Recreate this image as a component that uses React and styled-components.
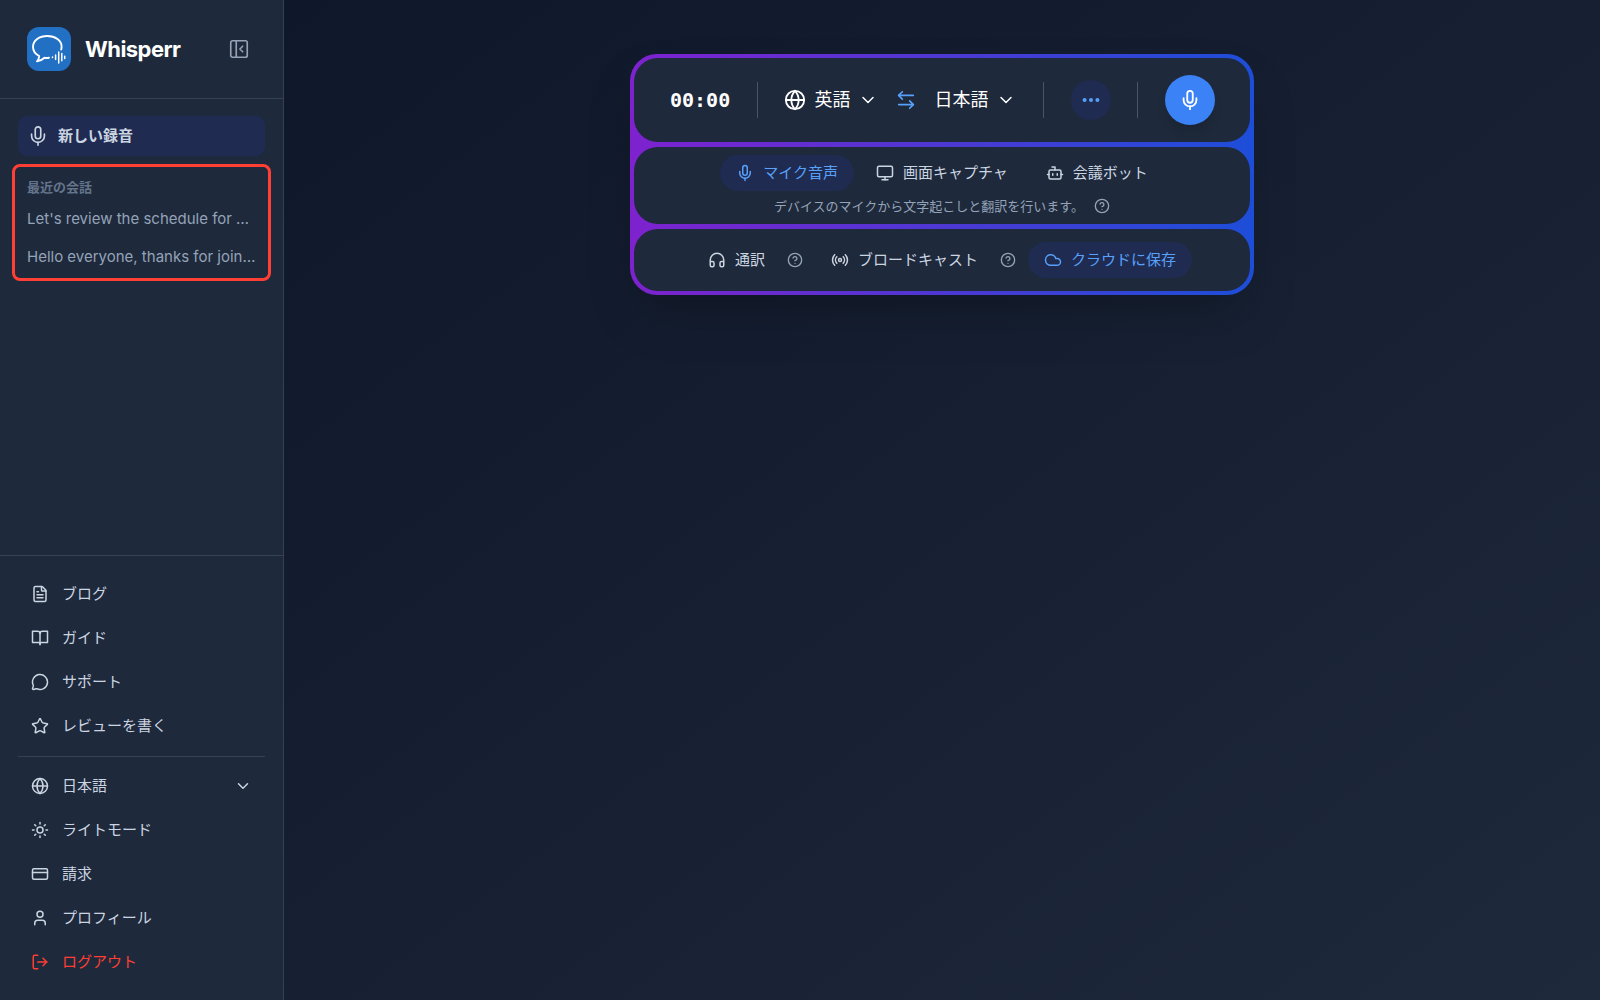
import { useState } from "react";
import styled, { createGlobalStyle, css } from "styled-components";
import {
  ArrowLeftRight,
  Bot,
  ChevronDown,
  CircleQuestionMark,
  Cloud,
  CreditCard,
  Ellipsis,
  FileText,
  Globe,
  Headphones,
  LogOut,
  MessageCircle,
  Mic,
  Monitor,
  PanelLeftClose,
  Radio,
  Star,
  Sun,
  User,
} from "lucide-react";

const GlobalStyle = createGlobalStyle`
  *, *::before, *::after {
    box-sizing: border-box;
  }

  body {
    margin: 0;
    background: #0f172a;
    color: #fff;
    font-family: Inter, "Noto Sans CJK JP", sans-serif;
    font-size: 15px;
    line-height: 24px;
    -webkit-font-smoothing: antialiased;
  }

  button, select {
    font: inherit;
    color: inherit;
    border: 0;
    padding: 0;
    background: none;
    cursor: pointer;
  }

  a {
    color: inherit;
    text-decoration: none;
  }

  svg {
    flex-shrink: 0;
  }
`;

const Layout = styled.div`
  display: flex;
  min-height: 100vh;
`;

/* ---------- sidebar ---------- */

const Sidebar = styled.aside`
  display: flex;
  flex-direction: column;
  width: 284px;
  flex-shrink: 0;
  background: #1e293b;
  border-right: 1px solid #334155;
`;

const SidebarHeader = styled.header`
  display: flex;
  align-items: center;
  gap: 14px;
  padding: 27px 33px 27px 27px;
  border-bottom: 1px solid #334155;
`;

const Brand = styled.h1`
  flex: 1;
  margin: 0;
  font-size: 22px;
  font-weight: 700;
  line-height: 32px;
  letter-spacing: -0.025em;
`;

const CollapseButton = styled.button`
  display: flex;
  color: #94a3b8;
`;

const NewRecording = styled.button`
  display: flex;
  align-items: center;
  gap: 9px;
  height: 40px;
  margin: 17px 18px 8px;
  padding: 0 9px;
  border-radius: 9px;
  background: #1f2b50;
  color: #cbd5e1;
  font-weight: 600;
`;

const Recent = styled.section`
  margin: 0 12px;
  padding: 10px 12px 2px;
  border: 3px solid #ff3f34;
  border-radius: 8px;
`;

const RecentTitle = styled.h2`
  margin: 0 0 3px;
  color: #64748b;
  font-size: 13px;
  font-weight: 600;
  line-height: 20px;
`;

const RecentLink = styled.a`
  display: block;
  padding: 7px 0;
  color: #94a3b8;
  white-space: nowrap;
`;

const SidebarFooter = styled.footer`
  margin-top: auto;
  padding: 18px 18px 18px;
  border-top: 1px solid #334155;
`;

const Menu = styled.nav`
  display: flex;
  flex-direction: column;
  gap: 4px;
`;

const MenuRule = styled.hr`
  height: 1px;
  margin: 10px 0 9px;
  border: 0;
  background: #334155;
`;

const menuRow = css`
  display: flex;
  align-items: center;
  gap: 13px;
  height: 40px;
  padding: 0 13px;
  color: ${(p) => (p.$danger ? "#ff3f34" : "#cbd5e1")};
`;

const MenuLink = styled.a`
  ${menuRow}
`;

const MenuButton = styled.button`
  ${menuRow}
  text-align: left;
`;

const MenuLabel = styled.label`
  ${menuRow}
`;

const MenuSelect = styled.select`
  flex: 1;
  appearance: none;
  outline: none;
`;

/* ---------- recorder ---------- */

const Main = styled.main`
  flex: 1;
  display: flex;
  justify-content: center;
  align-items: flex-start;
  padding: 54px 24px;
  background: linear-gradient(to bottom right, #0f172a, #1e293b);
`;

const Recorder = styled.div`
  display: flex;
  flex-direction: column;
  gap: 5px;
  width: 100%;
  max-width: 624px;
  padding: 4px;
  border-radius: 27px;
  background: linear-gradient(to right, #7e22ce, #1d4ed8);
  box-shadow: 0 26px 52px -12px rgba(0, 0, 0, 0.25);
`;

const Panel = styled.section`
  display: flex;
  align-items: center;
  justify-content: center;
  border-radius: 24px;
  background: #1e293b;
  color: #cbd5e1;
`;

const ControlPanel = styled(Panel)`
  justify-content: space-between;
  padding: 17px 35px 17px 36px;
  color: #fff;
`;

const SourcePanel = styled(Panel)`
  flex-direction: column;
  gap: 5px;
  padding: 8px 16px;
`;

const OptionPanel = styled(Panel)`
  gap: 12px;
  padding: 13px 16px;
`;

const Timer = styled.time`
  font-family: "DejaVu Sans Mono", monospace;
  font-size: 20px;
  font-weight: 700;
`;

const Divider = styled.span`
  width: 1px;
  height: 36px;
  background: #475569;
`;

const Languages = styled.div`
  display: flex;
  align-items: center;
  gap: 17px;
`;

const LanguageLabel = styled.label`
  display: flex;
  align-items: center;
  gap: 8px;
`;

const LanguageSelect = styled.select`
  field-sizing: content;
  appearance: none;
  outline: none;
  font-size: 18px;
  line-height: 28px;
`;

const SwapButton = styled.button`
  display: flex;
  color: #58a1fb;
`;

const RoundButton = styled.button`
  display: flex;
  align-items: center;
  justify-content: center;
  width: ${(p) => (p.$primary ? 50 : 40)}px;
  height: ${(p) => (p.$primary ? 50 : 40)}px;
  border-radius: 50%;
  background: ${(p) => (p.$primary ? "#3b82f6" : "#1f2b50")};
  color: ${(p) => (p.$primary ? "#fff" : "#58a1fb")};
  box-shadow: ${(p) => (p.$primary ? "0 8px 12px -3px rgba(0, 0, 0, 0.15)" : "none")};
`;

const Row = styled.div`
  display: flex;
  align-items: center;
  gap: ${(p) => p.$gap || 6}px;
`;

const Pill = styled.button`
  display: flex;
  align-items: center;
  gap: 9px;
  height: 36px;
  padding: 0 16px;
  border-radius: 18px;
  background: ${(p) => (p.$active ? "#1f2b50" : "transparent")};
  color: ${(p) => (p.$active ? "#58a1fb" : "#cbd5e1")};
  white-space: nowrap;
`;

const Hint = styled.p`
  margin: 0;
  color: #94a3b8;
  font-size: 13px;
  line-height: 20px;
`;

const HelpButton = styled.button`
  display: flex;
  color: #94a3b8;
`;

const Logo = () => (
  <svg width="44" height="44" viewBox="0 0 44 44" fill="none" aria-hidden="true">
    <rect width="44" height="44" rx="12" fill="#2270c4" />
    <g stroke="#fff" strokeLinecap="round" strokeLinejoin="round">
      <path
        d="M34.200 22.500c.3-1 .4-2 .4-3C34.600 13.400 28.300 9 20.300 9S6 13.600 6 19.800c0 4 2.200 7.200 6.200 9.200-.1 2.200-.8 3.800-2.200 5.300 3.200-.3 5.600-1.700 7.500-3.500 1.500.3 3 .3 4.500 0"
        strokeWidth="1.9"
      />
      <path
        d="M25.500 30v.6M28.600 28v4.600M31.700 25v11M34.800 26.600v7.200M37.700 29.200v2.200"
        strokeWidth="1.5"
      />
    </g>
  </svg>
);

const BookIcon = () => (
  <svg
    width="18"
    height="18"
    viewBox="0 0 24 24"
    fill="none"
    stroke="currentColor"
    strokeWidth="2"
    strokeLinecap="round"
    strokeLinejoin="round"
    aria-hidden="true"
  >
    <path d="M12 6v15" />
    <path d="M2 3h7a3 3 0 0 1 3 3 3 3 0 0 1 3-3h7v15h-8a2 2 0 0 0-2 2 2 2 0 0 0-2-2H2z" />
  </svg>
);

const LANGUAGES = [
  ["en", "英語"],
  ["ja", "日本語"],
  ["ko", "韓国語"],
];

const RECENT = [
  "Let's review the schedule for …",
  "Hello everyone, thanks for join…",
];

const SOURCES = [
  { id: "mic", label: "マイク音声", icon: Mic },
  { id: "screen", label: "画面キャプチャ", icon: Monitor },
  { id: "bot", label: "会議ボット", icon: Bot },
];

const LanguagePicker = ({ label, value, onChange, icon }) => (
  <LanguageLabel>
    {icon}
    <LanguageSelect
      aria-label={label}
      value={value}
      onChange={(e) => onChange(e.target.value)}
    >
      {LANGUAGES.map(([id, name]) => (
        <option key={id} value={id}>
          {name}
        </option>
      ))}
    </LanguageSelect>
    <ChevronDown size={20} strokeWidth={1.8} />
  </LanguageLabel>
);

const Help = () => (
  <HelpButton aria-label="ヘルプ">
    <CircleQuestionMark size={16} />
  </HelpButton>
);

export default function App() {
  const [from, setFrom] = useState("en");
  const [to, setTo] = useState("ja");
  const [source, setSource] = useState("mic");
  const [saving, setSaving] = useState(true);

  const swap = () => {
    setFrom(to);
    setTo(from);
  };

  return (
    <Layout lang="ja">
      <GlobalStyle />
      <Sidebar>
        <SidebarHeader>
          <Logo />
          <Brand>Whisperr</Brand>
          <CollapseButton aria-label="サイドバーを閉じる">
            <PanelLeftClose size={22} strokeWidth={1.8} />
          </CollapseButton>
        </SidebarHeader>

        <NewRecording>
          <Mic size={22} strokeWidth={1.8} />
          新しい録音
        </NewRecording>

        <Recent>
          <RecentTitle>最近の会話</RecentTitle>
          {RECENT.map((title) => (
            <RecentLink key={title} href="#">
              {title}
            </RecentLink>
          ))}
        </Recent>

        <SidebarFooter>
          <Menu>
            <MenuLink href="#">
              <FileText size={18} />
              ブログ
            </MenuLink>
            <MenuLink href="#">
              <BookIcon />
              ガイド
            </MenuLink>
            <MenuLink href="#">
              <MessageCircle size={18} />
              サポート
            </MenuLink>
            <MenuLink href="#">
              <Star size={18} />
              レビューを書く
            </MenuLink>
          </Menu>
          <MenuRule />
          <Menu>
            <MenuLabel>
              <Globe size={18} />
              <MenuSelect aria-label="表示言語" defaultValue="ja">
                <option value="ja">日本語</option>
                <option value="en">English</option>
              </MenuSelect>
              <ChevronDown size={18} />
            </MenuLabel>
            <MenuButton>
              <Sun size={18} />
              ライトモード
            </MenuButton>
            <MenuLink href="#">
              <CreditCard size={18} />
              請求
            </MenuLink>
            <MenuLink href="#">
              <User size={18} />
              プロフィール
            </MenuLink>
            <MenuButton $danger>
              <LogOut size={18} />
              ログアウト
            </MenuButton>
          </Menu>
        </SidebarFooter>
      </Sidebar>

      <Main>
        <Recorder>
          <ControlPanel>
            <Timer>00:00</Timer>
            <Divider />
            <Languages>
              <LanguagePicker
                label="話す言語"
                value={from}
                onChange={setFrom}
                icon={<Globe size={22} />}
              />
              <SwapButton aria-label="言語を入れ替える" onClick={swap}>
                <ArrowLeftRight size={22} strokeWidth={1.8} />
              </SwapButton>
              <LanguagePicker label="翻訳先の言語" value={to} onChange={setTo} />
            </Languages>
            <Divider />
            <RoundButton aria-label="その他">
              <Ellipsis size={22} strokeWidth={2.4} />
            </RoundButton>
            <Divider />
            <RoundButton $primary aria-label="録音を開始">
              <Mic size={22} />
            </RoundButton>
          </ControlPanel>

          <SourcePanel>
            <Row>
              {SOURCES.map(({ id, label, icon: Icon }) => (
                <Pill
                  key={id}
                  $active={source === id}
                  aria-pressed={source === id}
                  onClick={() => setSource(id)}
                >
                  <Icon size={18} />
                  {label}
                </Pill>
              ))}
            </Row>
            <Row $gap={10}>
              <Hint>デバイスのマイクから文字起こしと翻訳を行います。</Hint>
              <Help />
            </Row>
          </SourcePanel>

          <OptionPanel>
            <Row>
              <Pill>
                <Headphones size={18} />
                通訳
              </Pill>
              <Help />
            </Row>
            <Row>
              <Pill>
                <Radio size={18} />
                ブロードキャスト
              </Pill>
              <Help />
            </Row>
            <Pill
              $active={saving}
              aria-pressed={saving}
              onClick={() => setSaving(!saving)}
            >
              <Cloud size={18} />
              クラウドに保存
            </Pill>
          </OptionPanel>
        </Recorder>
      </Main>
    </Layout>
  );
}
